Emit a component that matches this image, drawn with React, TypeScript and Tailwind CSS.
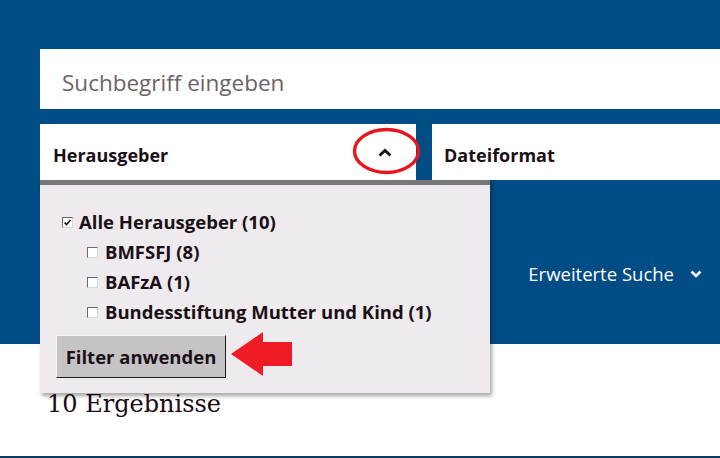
import React from 'react';

const sans = { fontFamily: '"Open Sans", "Noto Sans", sans-serif' };

const Box = ({ checked }: { checked?: boolean }) => (
  <span className="inline-flex h-[11px] w-[11px] items-center justify-center border border-t-[#6b6b6b] border-l-[#6b6b6b] border-r-[#d8d8d8] border-b-[#d8d8d8] bg-white">
    {checked && (
      <svg width="9" height="9" viewBox="0 0 9 9">
        <path d="M1.5 4.5 L3.5 6.5 L7.5 2" fill="none" stroke="#111" strokeWidth="1.6" />
      </svg>
    )}
  </span>
);

const options = ['BMFSFJ (8)', 'BAFzA (1)', 'Bundesstiftung Mutter und Kind (1)'];

export default function App() {
  return (
    <div className="relative flex h-[458px] w-[720px] flex-col overflow-hidden bg-white text-[#1a1016]" style={sans}>
      <div className="h-[344px] bg-[#014c85] pl-[40px] pt-[49px]">
        <div className="flex h-[60px] items-center bg-white pl-[22px] pt-[7px] text-[22.5px] text-[#6b6366]">
          Suchbegriff eingeben
        </div>
        <div className="mt-[15px] flex h-[56px] gap-[16px]">
          <div className="flex w-[376px] items-center justify-between bg-white pl-[13px] pr-[24px]">
            <span className="pt-[6px] text-[18px] font-bold">Herausgeber</span>
            <svg width="14" height="9" viewBox="0 0 14 9">
              <path d="M1.5 7.5 L7 2.5 L12.5 7.5" fill="none" stroke="#1a1016" strokeWidth="3" />
            </svg>
          </div>
          <div className="flex flex-1 items-center bg-white pl-[12px]">
            <span className="pt-[6px] text-[18px] font-bold">Dateiformat</span>
          </div>
        </div>
        <div className="mt-[80px] flex items-center justify-end gap-[16px] pr-[18px] text-white">
          <span className="text-[18.5px]">Erweiterte Suche</span>
          <svg width="12" height="8" viewBox="0 0 12 8">
            <path d="M1.5 1.5 L6 6 L10.5 1.5" fill="none" stroke="#fff" strokeWidth="2.6" />
          </svg>
        </div>
      </div>

      <div className="pl-[47px] pt-[48px] text-[24px] leading-none text-[#1a0a12]" style={{ fontFamily: '"DejaVu Serif", serif' }}>
        10 Ergebnisse
      </div>
      <div className="mt-auto h-[2px] bg-[#0d3a5f]" />

      {/* open dropdown */}
      <div className="absolute left-[40px] top-[180px] h-[213px] w-[450px] border-t-[5px] border-[#777] bg-[#eeeaed] shadow-[2px_3px_4px_rgba(0,0,0,0.35)]">
        <div className="flex flex-col gap-[8px] pl-[22px] pt-[26px] text-[18.5px] font-bold leading-[22px]">
          <label className="flex items-center gap-[6px]">
            <Box checked />
            Alle Herausgeber (10)
          </label>
          {options.map((o) => (
            <label key={o} className="flex items-center gap-[7px] pl-[25px]">
              <Box />
              {o}
            </label>
          ))}
        </div>
        <button className="ml-[16px] mt-[12px] h-[43px] w-[170px] border border-t-[#f4f4f4] border-l-[#f4f4f4] border-r-[#222] border-b-[#222] bg-[#c5c3c5] text-[18.5px] font-bold">
          Filter anwenden
        </button>
      </div>

      {/* annotations */}
      <svg className="absolute left-[352px] top-[127px]" width="69" height="48" viewBox="0 0 69 48">
        <ellipse cx="34.5" cy="24" rx="32" ry="21.5" fill="none" stroke="#e8141e" strokeWidth="3.4" />
      </svg>
      <svg className="absolute left-[230px] top-[331px]" width="64" height="46" viewBox="0 0 64 46">
        <path d="M1 23 L33 1 L33 11 L62 11 L62 35 L33 35 L33 45 Z" fill="#ee1c25" />
      </svg>
    </div>
  );
}
